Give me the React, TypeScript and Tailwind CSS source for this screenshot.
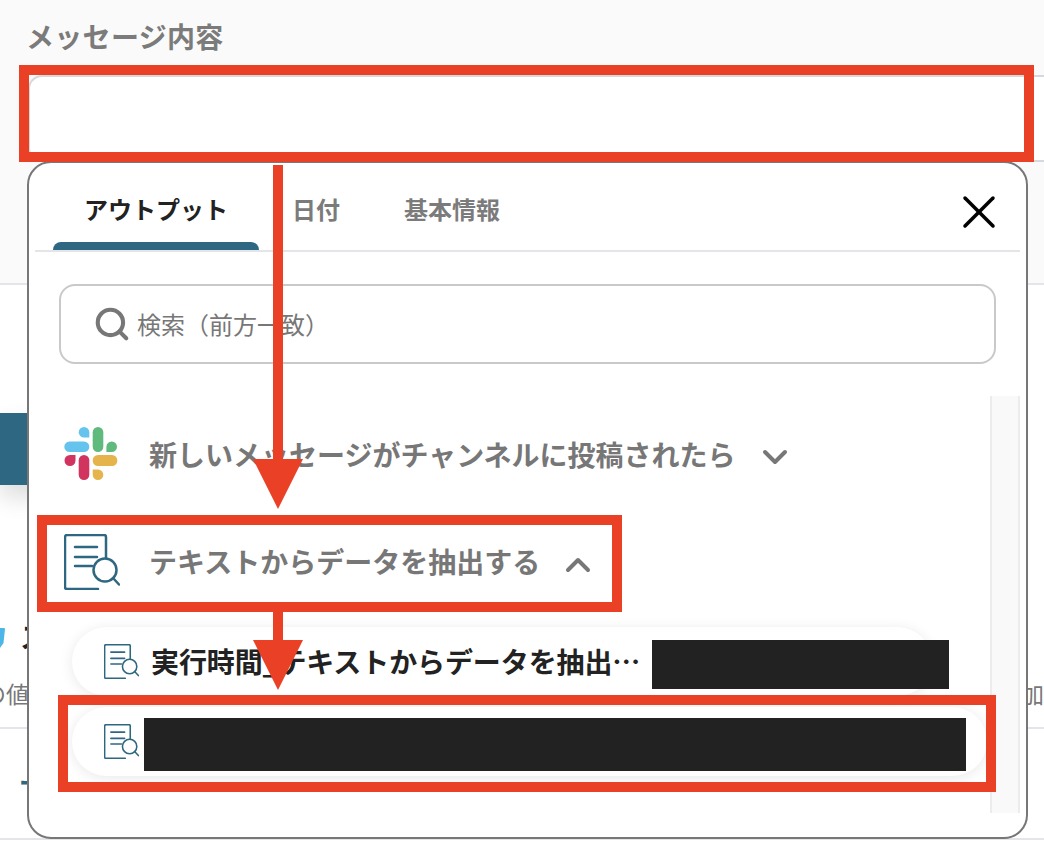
import React from "react";
import { ChevronDown, ChevronUp, Search, X } from "lucide-react";

const FONT = "font-['Noto_Sans_CJK_JP','Noto_Sans',sans-serif]";

const SlackLogo = () => (
  <svg width="54" height="54" viewBox="0 0 54 54" className="shrink-0">
    <g fill="#65c4ee">
      <path d="M20 0a5.300 5.300 0 0 0 0 10.600h5.300V5.300A5.300 5.300 0 0 0 20 0z" />
      <rect x="0.300" y="14.500" width="25" height="10.600" rx="5.300" />
    </g>
    <g fill="#5fba7d">
      <rect x="28.700" y="0" width="10.600" height="25" rx="5.300" />
      <path d="M53 19.800a5.300 5.300 0 0 0-10.600 0v5.300h5.300a5.300 5.300 0 0 0 5.300-5.300z" />
    </g>
    <g fill="#d0345f">
      <path d="M0.500 33.500a5.500 5.500 0 0 0 11 0V28H6a5.500 5.500 0 0 0-5.500 5.500z" />
      <rect x="14.700" y="28" width="10.600" height="25" rx="5.300" />
    </g>
    <g fill="#e6b44c">
      <rect x="28.700" y="28" width="24.600" height="11" rx="5.300" />
      <path d="M34 53a5.300 5.300 0 0 0 0-10.600h-5.300v5.300A5.300 5.300 0 0 0 34 53z" />
    </g>
  </svg>
);

// document with magnifier, used at two sizes
const DocSearchIcon = ({ size }: { size: number }) => (
  <svg width={size} height={size} viewBox="0 0 56 56" fill="none" stroke="#2e6782" strokeWidth="2.500" className="shrink-0">
    <path d="M34 55H3a2 2 0 0 1-2-2V3a2 2 0 0 1 2-2h37a2 2 0 0 1 2 2v21" strokeLinecap="round" />
    <path d="M11 13h22M11 23h22M11 32h17" strokeLinecap="round" />
    <circle cx="41" cy="36" r="11.500" />
    <path d="M49 44l6 6.500" strokeLinecap="round" />
  </svg>
);

const Arrow = ({ className }: { className: string }) => (
  <svg width="50" height="50" viewBox="0 0 50 50" className={className}>
    <path d="M0 0h50L25 50z" fill="#ea4025" />
  </svg>
);

export default function App() {
  return (
    <div className={`${FONT} relative h-[862px] w-[1044px] overflow-hidden bg-white`}>
      {/* page under the popup */}
      <section className="h-[285px] border-b-2 border-[#e3e5e8] bg-[#fafafa] pl-[28px] pt-[17px]">
        <h2 className="-ml-[2px] text-[28px] leading-[38px] font-bold tracking-[0.3px] text-[#7b7b7b]">メッセージ内容</h2>
        <div className="mt-[20px] h-[87px] rounded-l-[14px] border-y-2 border-l-2 border-[#d5d8dc] bg-white" />
      </section>
      <section className="pt-[128px]">
        <div className="h-[72px] w-[60px] bg-[#2e6782] shadow-[0_12px_24px_rgba(0,0,0,0.14)]" />
        <div className="mt-[138px] flex h-[106px] items-start justify-between border-b-2 border-[#e3e5e8]">
          <div className="-mt-[4px] text-[#777]">
            <div className="flex h-[34px] items-start">
              <svg width="5" height="20" viewBox="0 0 5 20" className="mt-[9px] shrink-0">
                <path d="M0 0H4Q5 0 5 1L3.500 15L0 20Z" fill="#4db6e8" />
              </svg>
              <span className="ml-[15px] text-[28px] leading-[34px] font-bold text-[#222]">ス</span>
            </div>
            <div className="-ml-[17px] mt-[23px] text-[23px] leading-[34px]">の値</div>
          </div>
          <div className="pt-[53px] text-[23px] leading-[34px] text-[#777]">加</div>
        </div>
        <div className="h-[111px] border-b-2 border-[#e3e5e8] pl-[19px] pt-[38px] text-[24px] leading-[30px] font-bold text-[#2e6782]">ー</div>
      </section>

      {/* variable picker popup */}
      <div className="absolute left-[27px] top-[161px] flex h-[678px] w-[1001px] flex-col rounded-[24px] border-2 border-[#777] bg-white px-[6px]">
        <div className="flex h-[89px] items-stretch border-b-2 border-[#e3e5e8] pl-[18px]">
          <div className="flex w-[206px] flex-col items-center justify-between">
            <span className="pt-[28px] text-[24px] leading-[36px] font-bold text-[#222]">アウトプット</span>
            <span className="h-[8px] w-full rounded-t-[8px] bg-[#2e6782]" />
          </div>
          <span className="ml-[33px] pt-[28px] text-[24px] leading-[36px] font-bold text-[#7b7b7b]">日付</span>
          <span className="ml-[64px] pt-[28px] text-[24px] leading-[36px] font-bold text-[#7b7b7b]">基本情報</span>
          <X size={56} strokeWidth={1.500} className="ml-auto mr-[13px] mt-[21px] text-black" />
        </div>
        <div className="mx-[24px] mt-[32px] flex h-[80px] items-center rounded-[16px] border-2 border-[#c8c9cb] pl-[32px]">
          <Search size={38} strokeWidth={2.600} className="text-[#777]" />
          <span className="ml-[6px] text-[24px] text-[#777]">検索（前方一致）</span>
        </div>
        <div className="relative mt-[32px] flex-1">
          <div className="absolute bottom-[24px] right-0 top-0 w-[30px] border-x-2 border-[#ececec] bg-[#f9f9f9]" />
          <div className="flex h-[113px] items-center pl-[29px] pt-[2px]">
            <SlackLogo />
            <span className="ml-[31px] text-[28px] font-bold text-[#777]">新しいメッセージがチャンネルに投稿されたら</span>
            <ChevronDown size={40} strokeWidth={2.400} className="ml-[19px] mt-[6px] text-[#777]" />
          </div>
          <div className="flex h-[106px] items-center pl-[29px]">
            <DocSearchIcon size={56} />
            <span className="ml-[29px] -mt-[3px] text-[28px] font-bold text-[#777]">テキストからデータを抽出する</span>
            <ChevronUp size={40} strokeWidth={2.400} className="ml-[18px] mt-[6px] text-[#777]" />
          </div>
          <div className="ml-[37px] mt-[12px] flex h-[69px] w-[860px] items-center rounded-full bg-white pl-[32px] shadow-[0_2px_14px_rgba(0,0,0,0.09)]">
            <DocSearchIcon size={35} />
            <span className="ml-[12px] -mt-[2px] whitespace-nowrap text-[28px] tracking-[-0.1px] font-bold text-[#222]">実行時間_テキストからデータを抽出…</span>
            <span className="ml-[12px] mt-[6px] h-[49px] w-[297px] shrink-0 bg-[#222]" />
          </div>
          <div className="ml-[37px] mt-[11px] flex h-[69px] w-[915px] items-center rounded-full bg-white pl-[32px] shadow-[0_2px_14px_rgba(0,0,0,0.09)]">
            <DocSearchIcon size={35} />
            <span className="ml-[5px] mt-[6px] h-[53px] w-[822px] shrink-0 bg-[#222]" />
          </div>
        </div>
      </div>

      {/* red annotations */}
      <div className="absolute left-[19px] top-[65px] h-[97px] w-[1015px] border-[10px] border-[#ea4025]" />
      <div className="absolute left-[37px] top-[515px] h-[97px] w-[585px] border-[10px] border-[#ea4025]" />
      <div className="absolute left-[58px] top-[695px] h-[97px] w-[938px] border-[10px] border-[#ea4025]" />
      <div className="absolute left-[273px] top-[165px] h-[300px] w-[10px] bg-[#ea4025]" />
      <Arrow className="absolute left-[253px] top-[459px]" />
      <div className="absolute left-[273px] top-[612px] h-[30px] w-[10px] bg-[#ea4025]" />
      <Arrow className="absolute left-[253px] top-[640px]" />
    </div>
  );
}
